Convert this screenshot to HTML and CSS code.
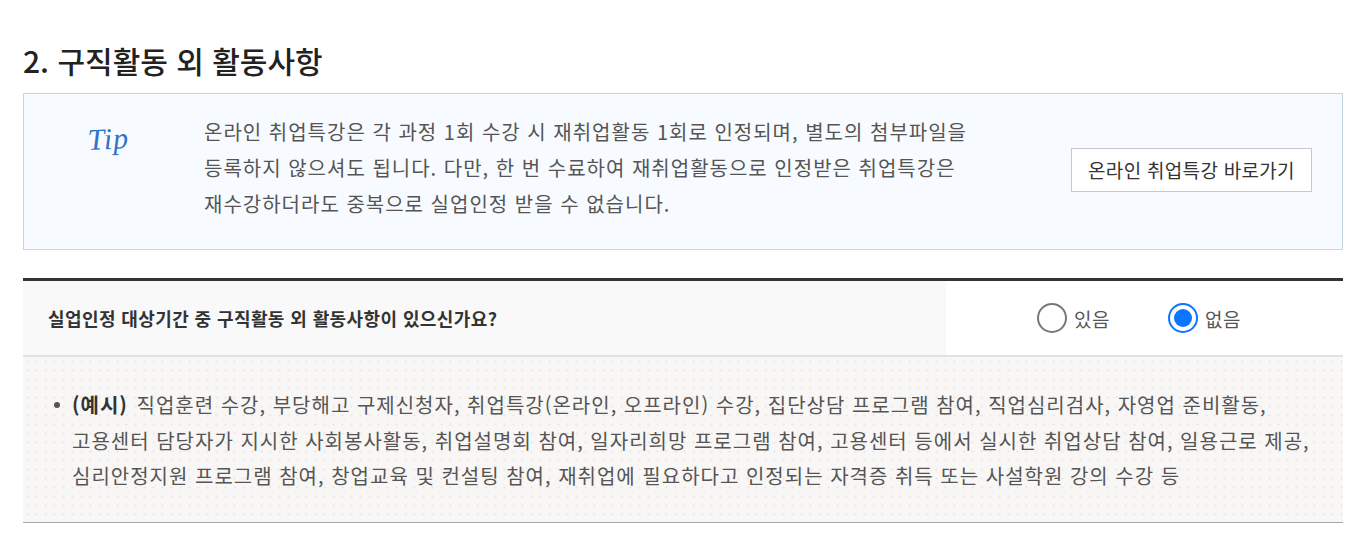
FILE: index.html
```html
<!DOCTYPE html>
<html lang="ko">
<head>
    <meta charset="UTF-8">
    <meta name="viewport" content="width=device-width, initial-scale=1.0">
    <title>구직활동 외 활동사항</title>
    <link rel="stylesheet" href="styles.css">
</head>
<body>
    <div class="container">
        <h2 class="sec-title">2. 구직활동 외 활동사항</h2>
        <div class="tip-box">
            <div class="tip-icon">Tip</div>
            <p class="tip-text">온라인 취업특강은 각 과정 1회 수강 시 재취업활동 1회로 인정되며, 별도의 첨부파일을 등록하지 않으셔도 됩니다. 다만, 한 번 수료하여 재취업활동으로 인정받은 취업특강은 재수강하더라도 중복으로 실업인정 받을 수 없습니다.</p>
            <a class="btn-line" href="#">온라인 취업특강 바로가기</a>
        </div>
        <div class="q-table">
            <div class="q-row">
                <div class="q-label">실업인정 대상기간 중 구직활동 외 활동사항이 있으신가요?</div>
                <div class="q-value">
                    <label class="radio"><input type="radio" name="act" value="Y"><span class="mark"></span>있음</label>
                    <label class="radio"><input type="radio" name="act" value="N" checked><span class="mark"></span>없음</label>
                </div>
            </div>
            <div class="q-desc">
                <ul>
                    <li><strong>(예시)</strong> 직업훈련 수강, 부당해고 구제신청자, 취업특강(온라인, 오프라인) 수강, 집단상담 프로그램 참여, 직업심리검사, 자영업 준비활동, 고용센터 담당자가 지시한 사회봉사활동, 취업설명회 참여, 일자리희망 프로그램 참여, 고용센터 등에서 실시한 취업상담 참여, 일용근로 제공, 심리안정지원 프로그램 참여, 창업교육 및 컨설팅 참여, 재취업에 필요하다고 인정되는 자격증 취득 또는 사설학원 강의 수강 등</li>
                </ul>
            </div>
        </div>
    </div>
</body>
</html>
```

FILE: styles.css
```css
* {
    margin: 0;
    padding: 0;
    box-sizing: border-box;
    font-family: "Noto Sans CJK KR", "Noto Sans", sans-serif;
}
body { background: #fff; color: #555; }
.container { width: 1320px; margin-left: 23px; padding-top: 41px; }

.sec-title { font-size: 30px; line-height: 39px; font-weight: 500; color: #222; margin-bottom: 13px; letter-spacing: 0; }

.tip-box {
    display: flex; align-items: flex-start;
    background: #f7fbff; border: 1px solid #c3d6e2;
    padding: 20px 30px 26px 0; height: 157px;
}
.tip-icon {
    width: 168px; text-align: center; padding-top: 10px;
    font-family: "Liberation Serif", serif; font-style: italic;
    font-size: 30px; line-height: 1; color: #2f73c4; letter-spacing: 1px;
    transform: rotate(-3deg);
}
.tip-text {
    width: 800px; margin-left: 12px;
    font-size: 20px; line-height: 36px; color: #555; letter-spacing: 1px; word-break: keep-all;
}
.btn-line {
    margin-left: auto; margin-top: 34px;
    width: 241px; height: 44px; line-height: 42px; text-align: center;
    border: 1px solid #c8c8c8; background: #fff;
    font-size: 19px; color: #333; text-decoration: none; letter-spacing: 0.3px;
}

.q-table { margin-top: 28px; border-top: 3px solid #333; }
.q-row { display: flex; height: 76px; border-bottom: 2px solid #e2e2e2; }
.q-label {
    width: 923px; background: #f9f9f9; padding-left: 25px;
    display: flex; align-items: center;
    font-size: 18px; font-weight: 700; color: #333; letter-spacing: 0.4px;
}
.q-value { flex: 1; display: flex; align-items: center; padding-left: 91px; gap: 58px; }
.radio { display: flex; align-items: center; gap: 7px; font-size: 19px; color: #555; cursor: pointer; letter-spacing: 0.5px; }
.radio input { display: none; }
.radio .mark {
    width: 30px; height: 30px; border-radius: 50%;
    border: 2px solid #777; background: #fff; position: relative;
}
.radio input:checked + .mark { border-color: #0a75ff; }
.radio input:checked + .mark::after {
    content: ""; position: absolute; left: 4px; top: 4px;
    width: 18px; height: 18px; border-radius: 50%; background: #0a75ff;
}

.q-desc {
    background-color: #f9f7f5;
    background-image: radial-gradient(#efebe7 1px, transparent 1.2px);
    background-size: 9px 9px;
    border-bottom: 1px solid #aaa;
    padding: 30px 10px 28px 30px;
}
.q-desc ul { list-style: none; }
.q-desc li {
    position: relative; padding-left: 19px;
    font-size: 20px; line-height: 35.5px; color: #555; letter-spacing: 1px; word-break: keep-all;
}
.q-desc li::before {
    content: ""; position: absolute; left: 1px; top: 15px;
    width: 6px; height: 6px; border-radius: 50%; background: #555;
}
.q-desc strong { color: #333; margin-right: 2px; }
```
